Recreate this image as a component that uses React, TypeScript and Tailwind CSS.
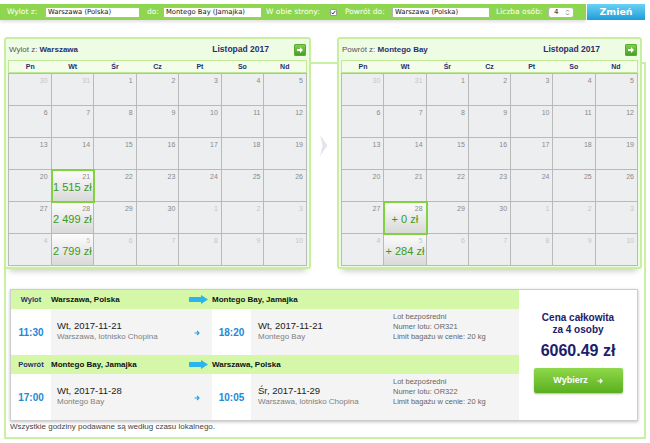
import clsx from "clsx";

const rows = [
  [30, 31, 1, 2, 3, 4, 5],
  [6, 7, 8, 9, 10, 11, 12],
  [13, 14, 15, 16, 17, 18, 19],
  [20, 21, 22, 23, 24, 25, 26],
  [27, 28, 29, 30, 1, 2, 3],
  [4, 5, 6, 7, 8, 9, 10],
];
const dayNames = ["Pn", "Wt", "Śr", "Cz", "Pt", "So", "Nd"];

const GreenArrowBtn = () => (
  <span className="w-[12px] h-[12px] rounded-[2px] bg-linear-to-b from-[#86d64f] to-[#3f9b22] flex items-center justify-center shadow-[inset_0_0_0_1px_#5aac2e]">
    <svg width="8" height="8" viewBox="0 0 8 8">
      <path d="M1 3h3V1l3 3-3 3V5H1z" fill="#fff" />
    </svg>
  </span>
);

type CalProps = {
  title: string;
  city: string;
  prices: Record<number, string>;
  selected: number;
  width: string;
};

const Calendar = ({ title, city, prices, selected, width }: CalProps) => (
  <div
    className={clsx(
      "border-2 border-[#c8ef9f] bg-[#effce4] rounded-[3px] px-[2px] pb-[1px] shadow-[0_7px_6px_-5px_rgba(0,0,0,0.22)]",
      width
    )}
  >
    <div className="h-[21px] flex items-center pl-[1px] pr-[1px] text-[8px]">
      <span className="text-[#555]">
        {title} <b className="text-[#27306f]">{city}</b>
      </span>
      <span className="ml-auto mr-[25px] font-bold text-[8.5px] text-[#27306f]">Listopad 2017</span>
      <GreenArrowBtn />
    </div>
    <div className="grid grid-cols-7 border border-[#bde894] bg-[#f3fdea] h-[13px]">
      {dayNames.map((n) => (
        <span key={n} className="text-center font-bold text-[7px] leading-[11px] text-[#27306f]">
          {n}
        </span>
      ))}
    </div>
    <div className="grid grid-cols-7 border-l border-t border-[#b9b9b9]">
      {rows.flat().map((d, i) => {
        const faded = i < 2 || i >= 32;
        const price = prices[i];
        return (
          <div
            key={i}
            className={clsx(
              "h-[32px] border-r border-b border-[#b9b9b9] flex flex-col",
              price ? "bg-linear-to-b from-[#fdfdfd] to-[#d9d9d9]" : "bg-[#eceef0]",
              i === selected && "relative z-10 outline-2 outline-[#82d13e] -outline-offset-1"
            )}
          >
            <span
              className={clsx(
                "text-right pr-[3px] pt-[2px] text-[7px] leading-[9px]",
                faded ? "text-[#c6c6c6]" : "text-[#8a8a8a]"
              )}
            >
              {d}
            </span>
            {price && (
              <span className="text-center text-[11px] leading-[13px] text-[#3a9a22] whitespace-nowrap">
                {price}
              </span>
            )}
          </div>
        );
      })}
    </div>
  </div>
);

const BigArrow = () => (
  <svg width="20" height="9" viewBox="0 0 20 9">
    <polygon points="0,2 12,2 12,0 19,4.5 12,9 12,7 0,7" fill="#2cb4ec" />
  </svg>
);

const SmallArrow = () => (
  <svg width="6" height="6" viewBox="0 0 6 6">
    <path d="M0.5 3h4M3 1l2 2-2 2" stroke="#2aa4e4" strokeWidth="1.2" fill="none" />
  </svg>
);

const LegHeader = ({ label, from, to }: { label: string; from: string; to: string }) => (
  <div className="h-[19px] bg-[#d4f8a7] flex items-center">
    <span className="w-[40px] text-center font-bold text-[7.5px] text-[#27306f]">{label}</span>
    <span className="w-[138px] font-bold text-[8px] text-[#111]">{from}</span>
    <span className="w-[23px] flex items-center">
      <BigArrow />
    </span>
    <span className="font-bold text-[8px] text-[#111]">{to}</span>
  </div>
);

type LegProps = {
  t1: string;
  d1: string;
  p1: string;
  t2: string;
  d2: string;
  p2: string;
  num: string;
};

const LegRow = ({ t1, d1, p1, t2, d2, p2, num }: LegProps) => (
  <div className="h-[46px] flex">
    <div className="w-[40px] flex items-center justify-center font-bold text-[10px] text-[#2189d6] pt-[1px]">{t1}</div>
    <div className="w-[161px] bg-[#f4f4f4] flex items-center pl-[6px] pr-[12px]">
      <div className="flex flex-col -mt-[2px]">
        <span className="text-[9.5px] leading-[12px] text-[#222]">{d1}</span>
        <span className="text-[8px] leading-[10px] text-[#808080]">{p1}</span>
      </div>
      <span className="ml-auto pt-[2px]">
        <SmallArrow />
      </span>
    </div>
    <div className="w-[39px] flex items-center justify-center font-bold text-[10px] text-[#2189d6] pt-[1px]">{t2}</div>
    <div className="flex-1 bg-[#f4f4f4] flex">
      <div className="w-[142px] pl-[7px] flex flex-col justify-center -mt-[2px]">
        <span className="text-[9.5px] leading-[12px] text-[#222]">{d2}</span>
        <span className="text-[8px] leading-[10px] text-[#808080]">{p2}</span>
      </div>
      <div className="flex flex-col pt-[3px] text-[7.5px] leading-[10px] text-[#666]">
        <span>Lot bezpośredni</span>
        <span>Numer lotu: {num}</span>
        <span>Limit bagażu w cenie: 20 kg</span>
      </div>
    </div>
  </div>
);

const TextInput = ({ value, w }: { value: string; w: string }) => (
  <div className={clsx("h-[11px] bg-white border border-[#b4b4b4] flex items-center pl-[2px] text-[6.8px] text-[#111] whitespace-nowrap", w)}>
    {value}
  </div>
);

export default function App() {
  return (
    <div className="w-[650px] h-[443px] overflow-hidden bg-white font-['Liberation_Sans',Arial,sans-serif]">
      {/* search bar */}
      <div className="mt-[4px] flex h-[16px] font-['DejaVu_Sans',Verdana,sans-serif]">
        <div className="w-[586px] bg-[#8fd650] flex items-center text-white text-[7.5px] shadow-[0_2px_3px_rgba(0,0,0,0.12)]">
          <span className="w-[45px] pl-[7px]">Wylot z:</span>
          <TextInput value="Warszawa (Polska)" w="w-[95px]" />
          <span className="w-[23px] pl-[7px]">do:</span>
          <TextInput value="Montego Bay (Jamajka)" w="w-[99px]" />
          <span className="w-[68px] pl-[4px]">W obie strony:</span>
          <span className="w-[7px] h-[7px] bg-white border border-[#9a9a9a] rounded-[1px] flex items-center justify-center">
            <svg width="5" height="5" viewBox="0 0 5 5">
              <path d="M0.6 2.6l1.3 1.4L4.4 0.8" stroke="#222" strokeWidth="0.9" fill="none" />
            </svg>
          </span>
          <span className="w-[55px] pl-[8px]">Powrót do:</span>
          <TextInput value="Warszawa (Polska)" w="w-[98px]" />
          <span className="w-[58px] pl-[6px]">Liczba osób:</span>
          <div className="w-[26px] h-[11px] bg-white border border-[#b4b4b4] rounded-[3px] flex items-center pl-[5px] pr-[3px] text-[7px] text-[#111]">
            4
            <svg className="ml-auto" width="5" height="7" viewBox="0 0 5 7">
              <path d="M1 2.6L2.5 1 4 2.6M1 4.4L2.5 6 4 4.4" stroke="#666" strokeWidth="0.7" fill="none" />
            </svg>
          </div>
        </div>
        <div className="ml-[1px] w-[58px] bg-linear-to-b from-[#66d2f6] to-[#1b9cd8] flex items-center justify-center text-white font-bold text-[9.5px]">
          Zmień
        </div>
      </div>

      {/* frame */}
      <div className="ml-[4px] mt-[42px] w-[642px] h-[377px] border-2 border-[#c9f0a3]">
        <div className="-mt-[27px] -ml-[2px] flex">
          <Calendar
            title="Wylot z:"
            city="Warszawa"
            prices={{ 22: "1 515 zł", 29: "2 499 zł", 36: "2 799 zł" }}
            selected={22}
            width="w-[307px]"
          />
          <div className="w-[26px] flex justify-center pt-[98px]">
            <svg width="8" height="21" viewBox="0 0 8 21">
              <polygon points="0,0 7.5,10.5 0,21 2.5,10.5" fill="#e2e6ec" />
            </svg>
          </div>
          <Calendar
            title="Powrót z:"
            city="Montego Bay"
            prices={{ 29: "+ 0 zł", 36: "+ 284 zł" }}
            selected={29}
            width="w-[305px]"
          />
        </div>

        <div className="ml-[4px] mt-[20px] w-[628px] h-[132px] border border-[#cdcdcd] bg-white flex shadow-[0_1px_3px_rgba(0,0,0,0.25)]">
          <div className="w-[508px] flex flex-col">
            <LegHeader label="Wylot" from="Warszawa, Polska" to="Montego Bay, Jamajka" />
            <LegRow
              t1="11:30"
              d1="Wt, 2017-11-21"
              p1="Warszawa, lotnisko Chopina"
              t2="18:20"
              d2="Wt, 2017-11-21"
              p2="Montego Bay"
              num="OR321"
            />
            <LegHeader label="Powrót" from="Montego Bay, Jamajka" to="Warszawa, Polska" />
            <LegRow
              t1="17:00"
              d1="Wt, 2017-11-28"
              p1="Montego Bay"
              t2="10:05"
              d2="Śr, 2017-11-29"
              p2="Warszawa, lotnisko Chopina"
              num="OR322"
            />
          </div>
          <div className="flex-1 flex flex-col items-center pt-[22px] text-[#1b206b]">
            <span className="font-bold text-[10px] leading-[12px]">Cena całkowita</span>
            <span className="font-bold text-[10px] leading-[12px]">za 4 osoby</span>
            <span className="mt-[5px] font-bold text-[16px] leading-[20px]">6060.49 zł</span>
            <button className="mt-[7px] w-[89px] h-[25px] rounded-[2px] bg-linear-to-b from-[#8fd849] to-[#5aaf1e] shadow-[0_1px_2px_rgba(0,0,0,0.3)] flex items-center justify-center gap-[9px] text-white font-bold text-[9px]">
              Wybierz
              <svg width="6" height="6" viewBox="0 0 6 6">
                <path d="M0.5 3h4M3 1l2 2-2 2" stroke="#fff" strokeWidth="1.2" fill="none" />
              </svg>
            </button>
          </div>
        </div>
        <div className="ml-[4px] mt-[1px] text-[8px] leading-[10px] text-[#444]">
          Wszystkie godziny podawane są według czasu lokalnego.
        </div>
      </div>
    </div>
  );
}
